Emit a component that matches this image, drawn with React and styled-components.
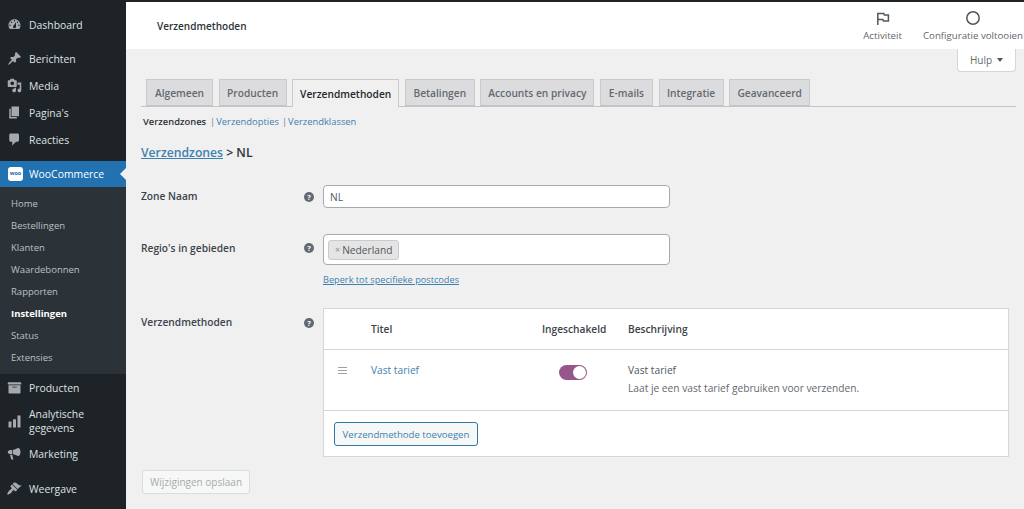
import React from 'react';
import styled, { createGlobalStyle } from 'styled-components';

const GlobalStyle = createGlobalStyle`
  html, body {
    margin: 0;
    padding: 0;
    background: #f0f0f1;
  }
  body {
    font-family: "Open Sans", "Noto Sans", "Liberation Sans", sans-serif;
    font-size: 10.2px;
    color: #3c434a;
    overflow: hidden;
  }
  * {
    box-sizing: border-box;
  }
`;

const Page = styled.div`
  width: 1024px;
  height: 509px;
  display: flex;
  flex-direction: column;
  overflow: hidden;
`;

const TopStrip = styled.div`
  height: 2px;
  flex: none;
  background: #1d2327;
`;

const Body = styled.div`
  flex: 1;
  display: flex;
  min-height: 0;
`;

const Sidebar = styled.nav`
  width: 126px;
  flex: none;
  background: #1d2327;
  padding-top: 9px;
  display: flex;
  flex-direction: column;
`;

const MenuItem = styled.a`
  position: relative;
  display: flex;
  align-items: center;
  gap: 7px;
  padding-left: 7px;
  height: ${(p) => p.$h || 27}px;
  margin-top: ${(p) => p.$mt || 0}px;
  color: ${(p) => (p.$active ? '#fff' : '#dfe1e3')};
  background: ${(p) => (p.$active ? '#2271b1' : 'transparent')};
  font-size: 10.4px;
  line-height: 14px;
  flex: none;

  svg {
    width: 15px;
    height: 15px;
    flex: none;
    fill: #a7aaad;
  }
`;

const ActiveArrow = styled.span`
  position: absolute;
  right: 0;
  top: 7px;
  border: 6px solid transparent;
  border-right-color: #f0f0f1;
  border-left-width: 0;
`;

const WooBadge = styled.span`
  width: 15px;
  height: 14px;
  flex: none;
  margin-left: 1px;
  margin-right: -1px;
  border-radius: 3px;
  background: #fff;
  color: #2271b1;
  font-size: 5.5px;
  font-weight: 700;
  line-height: 13px;
  text-align: center;
`;

const SubMenu = styled.div`
  background: #2c3338;
  padding: 6px 0 6px;
  flex: none;
`;

const SubItem = styled.a`
  display: flex;
  align-items: center;
  height: 21.9px;
  padding-left: 11px;
  font-size: 9.5px;
  color: ${(p) => (p.$current ? '#fff' : '#bcc0c4')};
  font-weight: ${(p) => (p.$current ? 700 : 400)};
`;

const Main = styled.main`
  flex: 1;
  min-width: 0;
  display: flex;
  flex-direction: column;
`;

const Header = styled.header`
  height: 47px;
  flex: none;
  background: #fff;
  display: flex;
  align-items: center;
  justify-content: space-between;
  padding-left: 31px;
`;

const PageTitle = styled.h1`
  margin: 0 0 0;
  font-size: 10px;
  font-weight: 600;
  color: #2c3338;
`;

const HeaderActions = styled.div`
  display: flex;
  gap: 21px;
  margin-right: 1px;
`;

const HeaderAction = styled.div`
  display: flex;
  flex-direction: column;
  align-items: center;
  gap: 3px;
  font-size: 9.7px;
  line-height: 12px;
  color: #5f666d;

  svg {
    width: 18px;
    height: 18px;
    display: block;
  }
`;

const HelpRow = styled.div`
  display: flex;
  justify-content: flex-end;
  padding-right: 8px;
  height: 30px;
  flex: none;
`;

const HelpButton = styled.button`
  width: 59px;
  height: 23px;
  background: #fff;
  border: 1px solid #d5d6d8;
  border-top: none;
  border-radius: 0 0 4px 4px;
  font: inherit;
  font-size: 10px;
  color: #646970;
  padding: 0;
  display: flex;
  align-items: center;
  justify-content: center;
  gap: 5px;

  &::after {
    content: '';
    border: 3px solid transparent;
    border-top: 4px solid #50575e;
    border-bottom: none;
  }
`;

const Content = styled.div`
  flex: 1;
  padding: 0 8px 0 15px;
`;

const Tabs = styled.div`
  display: flex;
  gap: 5.6px;
  height: 28px;
  padding-left: 5px;
  border-bottom: 1px solid #c3c4c7;
`;

const Tab = styled.a`
  height: ${(p) => (p.$active ? 28 : 27)}px;
  width: ${(p) => p.$w}px;
  display: flex;
  align-items: center;
  justify-content: center;
  background: ${(p) => (p.$active ? '#f0f0f1' : '#dcdcde')};
  border: 1px solid #c9cacc;
  border-bottom: ${(p) => (p.$active ? 'none' : '1px solid #c3c4c7')};
  font-size: 10.2px;
  font-weight: 600;
  color: ${(p) => (p.$active ? '#23282d' : '#646970')};
`;

const SubNav = styled.div`
  display: flex;
  align-items: center;
  height: 14px;
  margin-top: 7px;
  padding-left: 2px;
  font-size: 9.4px;
  color: #787c82;
`;

const SubNavLink = styled.a`
  color: ${(p) => (p.$current ? '#2c3338' : '#3f7fad')};
  font-weight: ${(p) => (p.$current ? 600 : 400)};
  margin-right: ${(p) => (p.$current ? 4 : 3)}px;
`;

const SubNavSep = styled.span`
  margin-right: 1px;
`;

const ZoneHeading = styled.h2`
  margin: 16px 0 0;
  font-size: 12.2px;
  line-height: 18px;
  font-weight: 600;
  color: #2c3338;

  a {
    color: #3f7fad;
    text-decoration: underline;
  }
`;

const FormRow = styled.div`
  display: grid;
  grid-template-columns: 163px 19px 1fr;
  margin-top: ${(p) => p.$mt}px;
`;

const FieldLabel = styled.label`
  font-size: 10.2px;
  line-height: ${(p) => p.$lh}px;
  font-weight: 600;
  color: #3c434a;
`;

const HelpTip = styled.span`
  width: 10px;
  height: 10px;
  margin-top: ${(p) => p.$mt}px;
  border-radius: 50%;
  background: #646970;
  color: #fff;
  font-size: 7.5px;
  font-weight: 700;
  line-height: 10px;
  text-align: center;
`;

const TextInput = styled.div`
  width: 347px;
  height: 23px;
  background: #fff;
  border: 1px solid #a7aaad;
  border-radius: 4px;
  display: flex;
  align-items: center;
  padding-left: 6px;
  font-size: 10.2px;
  color: #50575e;
`;

const SelectBox = styled(TextInput)`
  height: 31px;
  padding-left: 4px;
`;

const Chip = styled.span`
  width: 71px;
  height: 20px;
  display: flex;
  align-items: center;
  gap: 2px;
  padding-left: 6px;
  background: #e4e4e4;
  border: 1px solid #c9cacc;
  border-radius: 3px;
  font-size: 10.2px;
  color: #50575e;

  i {
    font-style: normal;
    color: #8c8f94;
    font-size: 9px;
  }
`;

const SmallLink = styled.a`
  display: block;
  margin-top: 8px;
  font-size: 9.2px;
  line-height: 13px;
  color: #3f7fad;
  text-decoration: underline;
`;

const MethodsTable = styled.div`
  width: 686px;
  background: #fff;
  border: 1px solid #d5d6d8;
`;

const TableRow = styled.div`
  display: grid;
  grid-template-columns: 47px 171px 86px 1fr;
  height: ${(p) => p.$h}px;
  border-bottom: 1px solid #d5d6d8;
  font-size: 10.2px;
  color: #50575e;
`;

const HeadCell = styled.div`
  align-self: center;
  font-weight: 600;
  color: #3c434a;
`;

const Cell = styled.div`
  padding-top: 13px;
  line-height: 15px;
`;

const DragHandle = styled.span`
  display: block;
  width: 9px;
  height: 7px;
  margin: 4px 0 0 14px;
  border-top: 1px solid #9da1a6;
  border-bottom: 1px solid #9da1a6;
  position: relative;

  &::after {
    content: '';
    position: absolute;
    left: 0;
    right: 0;
    top: 2px;
    height: 1px;
    background: #9da1a6;
  }
`;

const MethodLink = styled.a`
  color: #3f7fad;
`;

const Toggle = styled.span`
  display: block;
  position: relative;
  width: 28px;
  height: 15px;
  margin: 2px 0 0 17px;
  border-radius: 8px;
  background: #96588a;

  &::after {
    content: '';
    position: absolute;
    right: 1px;
    top: 1px;
    width: 13px;
    height: 13px;
    border-radius: 50%;
    background: #fff;
  }
`;

const MethodName = styled.div`
  font-weight: 500;
  color: #50575e;
`;

const MethodDesc = styled.div`
  margin-top: 3px;
  font-size: 10.2px;
  color: #646970;
`;

const TableFooter = styled.div`
  height: 45px;
  padding: 11px 0 0 10px;
`;

const OutlineButton = styled.button`
  width: 144px;
  height: 24px;
  padding: 0;
  background: #f6f7f7;
  border: 1px solid #2f77a8;
  border-radius: 3px;
  font: inherit;
  font-size: 9.6px;
  color: #3f7fad;
`;

const SaveButton = styled.button`
  display: block;
  width: 108px;
  height: 24px;
  margin: 13px 0 0 1px;
  padding: 0;
  background: #f6f7f7;
  border: 1px solid #dcdcde;
  border-radius: 3px;
  font: inherit;
  font-size: 10px;
  color: #a7aaad;
`;

const Icon = ({ d }) => (
  <svg viewBox="0 0 20 20" aria-hidden="true">
    <path fillRule="evenodd" d={d} />
  </svg>
);

const icons = {
  dashboard:
    'M3.76 16h12.48c1.1-1.37 1.76-3.11 1.76-5 0-4.42-3.58-8-8-8s-8 3.58-8 8c0 1.89.66 3.63 1.76 5zM10 4c.55 0 1 .45 1 1s-.45 1-1 1-1-.45-1-1 .45-1 1-1zM6 6c.55 0 1 .45 1 1s-.45 1-1 1-1-.45-1-1 .45-1 1-1zm8 0c.55 0 1 .45 1 1s-.45 1-1 1-1-.45-1-1 .45-1 1-1zm-5.37 5.55L12 7v6c0 1.1-.9 2-2 2s-2-.9-2-2c0-.57.24-1.08.63-1.45zM4 10c.55 0 1 .45 1 1s-.45 1-1 1-1-.45-1-1 .45-1 1-1zm12 0c.55 0 1 .45 1 1s-.45 1-1 1-1-.45-1-1 .45-1 1-1z',
  pin: 'M10.44 3.02l1.82-1.82 6.36 6.35-1.83 1.82c-1.05-.68-2.48-.57-3.41.36l-.75.75c-.92.93-1.04 2.35-.35 3.41l-1.83 1.82-2.41-2.41-2.8 2.79c-.42.42-3.38 2.71-3.8 2.29s1.86-3.39 2.28-3.81l2.79-2.79L4.1 9.36l1.83-1.82c1.05.69 2.48.57 3.4-.36l.75-.75c.93-.92 1.05-2.35.36-3.41z',
  media:
    'M13 11V4c0-.55-.45-1-1-1h-1.67L9 1H5L3.67 3H2c-.55 0-1 .45-1 1v7c0 .55.45 1 1 1h10c.55 0 1-.45 1-1zM7 4.5c1.38 0 2.5 1.12 2.5 2.5S8.38 9.5 7 9.5 4.5 8.38 4.5 7 5.62 4.5 7 4.5zM14 6h5v10.5c0 1.38-1.12 2.5-2.5 2.5S14 17.88 14 16.5s1.12-2.5 2.5-2.5c.17 0 .34.02.5.05V9h-3V6zm-4 8.05V13h2v3.5c0 1.38-1.12 2.5-2.5 2.5S7 17.88 7 16.5 8.12 14 9.5 14c.17 0 .34.02.5.05z',
  page: 'M6 15V2h10v13H6zm-1 1h8v2H3V5h2v11z',
  comment: 'M5 2h9c1.1 0 2 .9 2 2v7c0 1.1-.9 2-2 2h-2l-5 5v-5H5c-1.1 0-2-.9-2-2V4c0-1.1.9-2 2-2z',
  archive:
    'M19 4v2H1V4c0-.55.45-1 1-1h16c.55 0 1 .45 1 1zM2 7h16v10c0 .55-.45 1-1 1H3c-.55 0-1-.45-1-1V7zm11 3V9H7v1h6z',
  chart: 'M18 18V2h-4v16h4zm-6 0V7H8v11h4zm-6 0v-8H2v8h4z',
  megaphone:
    'M18 8c0 3-1.3 5.4-3 5.4-.5 0-4.5-2-7-2.3V5.1c2.500-.4 6.500-2.500 7-2.500 1.700 0 3 2.400 3 5.400zM7 5.200v5.800H4.500C2.600 11 1 9.700 1 8.100s1.600-2.900 3.500-2.900H7zM4 12h3l1.400 5.200c.1.400-.2.800-.6.800H6.200c-.3 0-.5-.2-.6-.4L4 12z',
  brush:
    'M14.480 11.060L7.410 3.990l1.500-1.500c.5-.56 2.300-.47 3.510.32 1.210.8 1.430 1.280 2.910 2.100 1.180.64 2.450 1.260 4.450.85l-5.800 5.300zm-.71.71L6.700 4.700 4.930 6.470c-.39.39-.39 1.020 0 1.410l1.060 1.060c.39.39.39 1.030 0 1.420-.6.6-1.430 1.110-2.210 1.690-.35.26-.7.53-1.010.84-1.430 1.430-2.700 4.300-2.300 5.100.4.800 3.700-.8 5.100-2.300.31-.31.58-.66.84-1.010.58-.78 1.090-1.610 1.690-2.210.39-.39 1.030-.39 1.420 0l1.060 1.060c.39.39 1.020.39 1.410 0l1.840-1.760z',
};

const topItems = [
  { icon: 'pin', label: 'Berichten' },
  { icon: 'media', label: 'Media' },
  { icon: 'page', label: "Pagina's" },
  { icon: 'comment', label: 'Reacties' },
];

const subItems = ['Home', 'Bestellingen', 'Klanten', 'Waardebonnen', 'Rapporten', 'Instellingen', 'Status', 'Extensies'];

const tabs = [
  ['Algemeen', 67],
  ['Producten', 68],
  ['Verzendmethoden', 107],
  ['Betalingen', 70],
  ['Accounts en privacy', 114],
  ['E-mails', 53],
  ['Integratie', 65],
  ['Geavanceerd', 81],
];

export default function App() {
  return (
    <Page>
      <GlobalStyle />
      <TopStrip />
      <Body>
        <Sidebar>
          <MenuItem>
            <Icon d={icons.dashboard} />
            Dashboard
          </MenuItem>
          <MenuItem $mt={7}>
            <Icon d={icons.pin} />
            {topItems[0].label}
          </MenuItem>
          {topItems.slice(1).map((item) => (
            <MenuItem key={item.label}>
              <Icon d={icons[item.icon]} />
              {item.label}
            </MenuItem>
          ))}
          <MenuItem $active $h={26} $mt={8}>
            <WooBadge>woo</WooBadge>
            WooCommerce
            <ActiveArrow />
          </MenuItem>
          <SubMenu>
            {subItems.map((item) => (
              <SubItem key={item} $current={item === 'Instellingen'}>
                {item}
              </SubItem>
            ))}
          </SubMenu>
          <MenuItem>
            <Icon d={icons.archive} />
            Producten
          </MenuItem>
          <MenuItem $h={28} $mt={6}>
            <Icon d={icons.chart} />
            <span>
              Analytische
              <br />
              gegevens
            </span>
          </MenuItem>
          <MenuItem $mt={5}>
            <Icon d={icons.megaphone} />
            Marketing
          </MenuItem>
          <MenuItem $mt={8}>
            <Icon d={icons.brush} />
            Weergave
          </MenuItem>
        </Sidebar>
        <Main>
          <Header>
            <PageTitle>Verzendmethoden</PageTitle>
            <HeaderActions>
              <HeaderAction>
                <svg viewBox="0 0 18 18" fill="none" stroke="#50575e" strokeWidth="1.5">
                  <path d="M3.800 16V4.500h6l.6 1.500h4v6h-5l-.6-1.500H3.800" />
                </svg>
                Activiteit
              </HeaderAction>
              <HeaderAction>
                <svg viewBox="0 0 18 18" fill="none" stroke="#50575e" strokeWidth="1.5">
                  <circle cx="9" cy="9" r="6.200" />
                </svg>
                Configuratie voltooien
              </HeaderAction>
            </HeaderActions>
          </Header>
          <HelpRow>
            <HelpButton>Hulp</HelpButton>
          </HelpRow>
          <Content>
            <Tabs>
              {tabs.map(([label, w]) => (
                <Tab key={label} $w={w} $active={label === 'Verzendmethoden'}>
                  {label}
                </Tab>
              ))}
            </Tabs>
            <SubNav>
              <SubNavLink $current>Verzendzones</SubNavLink>
              <SubNavSep>|</SubNavSep>
              <SubNavLink>Verzendopties</SubNavLink>
              <SubNavSep>|</SubNavSep>
              <SubNavLink>Verzendklassen</SubNavLink>
            </SubNav>
            <ZoneHeading>
              <a>Verzendzones</a> &gt; NL
            </ZoneHeading>
            <FormRow $mt={23}>
              <FieldLabel $lh={23}>Zone Naam</FieldLabel>
              <HelpTip $mt={7}>?</HelpTip>
              <TextInput>NL</TextInput>
            </FormRow>
            <FormRow $mt={26}>
              <FieldLabel $lh={29}>Regio's in gebieden</FieldLabel>
              <HelpTip $mt={9}>?</HelpTip>
              <div>
                <SelectBox>
                  <Chip>
                    <i>×</i>Nederland
                  </Chip>
                </SelectBox>
                <SmallLink>Beperk tot specifieke postcodes</SmallLink>
              </div>
            </FormRow>
            <FormRow $mt={22}>
              <FieldLabel $lh={28}>Verzendmethoden</FieldLabel>
              <HelpTip $mt={10}>?</HelpTip>
              <MethodsTable>
                <TableRow $h={41}>
                  <span />
                  <HeadCell>Titel</HeadCell>
                  <HeadCell>Ingeschakeld</HeadCell>
                  <HeadCell>Beschrijving</HeadCell>
                </TableRow>
                <TableRow $h={61}>
                  <Cell>
                    <DragHandle />
                  </Cell>
                  <Cell>
                    <MethodLink>Vast tarief</MethodLink>
                  </Cell>
                  <Cell>
                    <Toggle />
                  </Cell>
                  <Cell>
                    <MethodName>Vast tarief</MethodName>
                    <MethodDesc>Laat je een vast tarief gebruiken voor verzenden.</MethodDesc>
                  </Cell>
                </TableRow>
                <TableFooter>
                  <OutlineButton>Verzendmethode toevoegen</OutlineButton>
                </TableFooter>
              </MethodsTable>
            </FormRow>
            <SaveButton>Wijzigingen opslaan</SaveButton>
          </Content>
        </Main>
      </Body>
    </Page>
  );
}
